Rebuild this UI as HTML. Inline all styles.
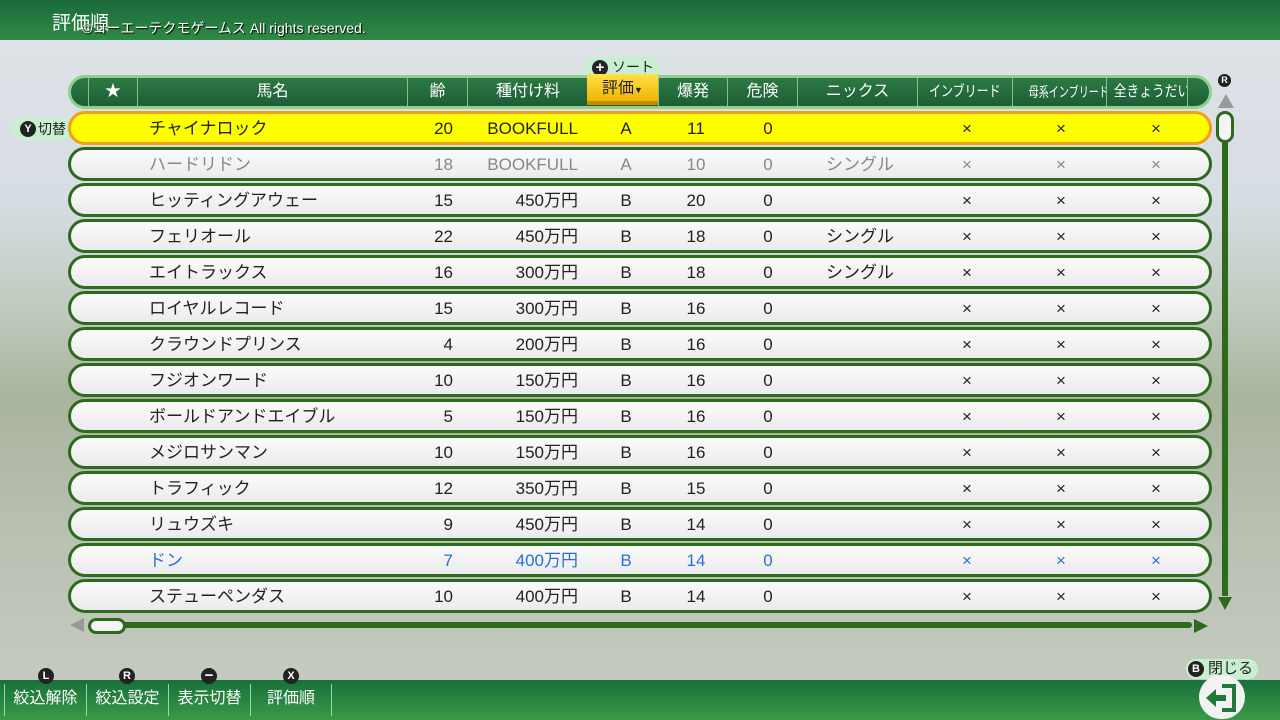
<!DOCTYPE html>
<html><head><meta charset="utf-8"><style>
*{margin:0;padding:0;box-sizing:border-box}
body{width:1280px;height:720px;overflow:hidden;position:relative;font-family:"Liberation Sans","Noto Sans CJK JP",sans-serif;
background:linear-gradient(180deg,#dfe3e8 0%,#d6dde3 28%,#c2cbc0 42%,#a9b49e 55%,#b9c1b3 75%,#c7cdc2 100%);}
.top{position:absolute;left:0;top:0;width:1280px;height:40px;background:linear-gradient(#1a6a3a,#2f8a45);}
.top .t{position:absolute;left:52px;top:8px;color:#fff;font-size:19px;}
.top .c{position:absolute;left:82px;top:18px;color:#fff;font-size:14px;text-shadow:1px 1px 1px #000}
.hdr{position:absolute;left:68px;top:75px;width:1144px;height:34px;border-radius:17px;background:linear-gradient(#2c7a44,#1d5e35);border:3px solid #8fd08f;}
.hc{position:absolute;top:0;height:28px;line-height:28px;color:#fff;font-size:16px;text-align:center;border-left:1px solid #7fc48a;white-space:nowrap;overflow:hidden}
.hc i{display:inline-block;font-style:normal;transform:scaleX(.8)}
.sort{position:absolute;left:587px;top:74px;width:71px;height:31px;background:linear-gradient(#ffe14a,#f0b400);border-bottom:4px solid #c98a00;text-align:center;line-height:30px;font-size:16px;color:#222}
.sortlbl{position:absolute;left:584px;top:57px;width:76px;height:20px;border-radius:10px;background:#c8efd0;font-size:14px;line-height:20px;padding-left:28px;color:#222}
.btn{position:absolute;width:16px;height:16px;border-radius:8px;background:#222;color:#fff;font-size:11px;font-weight:bold;text-align:center;line-height:16px}
.row{position:absolute;left:68px;width:1144px;height:34px;border-radius:17px;border:3px solid #2d6a1d;background:linear-gradient(#fbfbfb,#ebebed);font-size:17px;color:#222}
.row.sel{background:#ffff00;border-color:#f0a020}
.row.g{color:#888}.row.b{color:#2a6fd6}
.row span{position:absolute;top:1px;line-height:28px}
.sw{position:absolute;left:12px;top:118px;width:62px;height:22px;border-radius:11px;background:#c8efd0;font-size:14px;line-height:22px;padding-left:26px;color:#222}
.vbar{position:absolute;left:1222px;top:140px;width:6px;height:456px;background:#2d6a1d}
.bot{position:absolute;left:0;top:680px;width:1280px;height:40px;background:linear-gradient(#17703a,#3a9a48)}
.bb{position:absolute;top:684px;height:32px;line-height:30px;color:#fff;font-size:16px;border-left:1px solid #9fd8b0;text-align:center}
</style></head><body>
<div class="top"><span class="t">評価順</span><span class="c">©コーエーテクモゲームス All rights reserved.</span></div>

<div class="hdr">
<div class="hc" style="left:17px;width:49px">★</div>
<div class="hc" style="left:66px;width:270px">馬名</div>
<div class="hc" style="left:336px;width:60px">齢</div>
<div class="hc" style="left:396px;width:121px">種付け料</div>
<div class="hc" style="left:587px;width:69px">爆発</div>
<div class="hc" style="left:656px;width:70px">危険</div>
<div class="hc" style="left:726px;width:120px">ニックス</div>
<div class="hc" style="left:846px;width:95px;font-size:15px"><i>インブリード</i></div>
<div class="hc" style="left:941px;width:94px;font-size:14px"><i style="transform:scaleX(.72)">母系インブリード</i></div>
<div class="hc" style="left:1035px;width:82px;font-size:15px;border-right:1px solid #7fc48a"><i style="transform:scaleX(.85)">全きょうだい</i></div>
</div>
<div class="sortlbl">ソート</div><div class="btn" style="left:592px;top:60px;font-size:15px">+</div>
<div class="sort">評価<span style="font-size:9px">▼</span></div>

<div class="sw">切替</div><div class="btn" style="left:20px;top:121px">Y</div>

<div id="rows"></div>
<script>
var d=[["チャイナロック","20","BOOKFULL","A","11","0","","sel"],["ハードリドン","18","BOOKFULL","A","10","0","シングル","g"],["ヒッティングアウェー","15","450万円","B","20","0",""],["フェリオール","22","450万円","B","18","0","シングル"],["エイトラックス","16","300万円","B","18","0","シングル"],["ロイヤルレコード","15","300万円","B","16","0",""],["クラウンドプリンス","4","200万円","B","16","0",""],["フジオンワード","10","150万円","B","16","0",""],["ボールドアンドエイブル","5","150万円","B","16","0",""],["メジロサンマン","10","150万円","B","16","0",""],["トラフィック","12","350万円","B","15","0",""],["リュウズキ","9","450万円","B","14","0",""],["ドン","7","400万円","B","14","0","","b"],["ステューペンダス","10","400万円","B","14","0",""]];
var h="";d.forEach(function(r,i){h+='<div class="row '+(r[7]||"")+'" style="top:'+(111+i*36)+'px"><span style="left:78px">'+r[0]+'</span><span style="left:320px;width:62px;text-align:right">'+r[1]+'</span><span style="left:400px;width:107px;text-align:right">'+r[2]+'</span><span style="left:535px;width:40px;text-align:center">'+r[3]+'</span><span style="left:600px;width:50px;text-align:center">'+r[4]+'</span><span style="left:677px;width:40px;text-align:center">'+r[5]+'</span><span style="left:755px">'+r[6]+'</span><span style="left:878px;width:36px;text-align:center">×</span><span style="left:972px;width:36px;text-align:center">×</span><span style="left:1067px;width:36px;text-align:center">×</span></div>';});
document.getElementById("rows").innerHTML=h;
</script>

<div class="btn" style="left:1218px;top:74px;width:13px;height:13px;font-size:9px;line-height:13px">R</div>
<div style="position:absolute;left:1218px;top:94px;width:0;height:0;border-left:8px solid transparent;border-right:8px solid transparent;border-bottom:14px solid #999"></div>
<div class="vbar"></div>
<div style="position:absolute;left:1216px;top:111px;width:18px;height:32px;border-radius:9px;background:#f4f4f4;border:3px solid #2d6a1d"></div>
<div style="position:absolute;left:1218px;top:597px;width:0;height:0;border-left:7px solid transparent;border-right:7px solid transparent;border-top:13px solid #2d6a1d"></div>
<div style="position:absolute;left:100px;top:622px;width:1092px;height:6px;background:#2d6a1d;border-radius:3px"></div>
<div style="position:absolute;left:70px;top:618px;width:0;height:0;border-top:7px solid transparent;border-bottom:7px solid transparent;border-right:14px solid #999"></div>
<div style="position:absolute;left:88px;top:618px;width:38px;height:16px;border-radius:8px;background:#f4f4f4;border:3px solid #2d6a1d"></div>
<div style="position:absolute;left:1194px;top:619px;width:0;height:0;border-top:7px solid transparent;border-bottom:7px solid transparent;border-left:14px solid #2d6a1d"></div>

<div class="bot"></div>
<div class="bb" style="left:4px;width:82px">絞込解除</div>
<div class="bb" style="left:86px;width:82px">絞込設定</div>
<div class="bb" style="left:168px;width:82px">表示切替</div>
<div class="bb" style="left:250px;width:82px;border-right:1px solid #9fd8b0">評価順</div>
<div class="btn" style="left:38px;top:668px">L</div>
<div class="btn" style="left:119px;top:668px">R</div>
<div class="btn" style="left:201px;top:668px;font-size:15px">−</div>
<div class="btn" style="left:283px;top:668px">X</div>

<div style="position:absolute;left:1186px;top:659px;width:72px;height:20px;border-radius:10px;background:#c8efd0;font-size:15px;line-height:20px;padding-left:22px;color:#222">閉じる</div>
<div class="btn" style="left:1188px;top:661px">B</div>
<div style="position:absolute;left:1199px;top:675px;width:46px;height:44px;border-radius:23px;background:#f2f2f2"></div>
<svg style="position:absolute;left:1202px;top:680px" width="40" height="36" viewBox="0 0 40 36"><path d="M20 4h14v28h-14v-4h10v-20h-10z" fill="#1f7a3a"/><path d="M4 18l10-9v6h10v6h-10v6z" fill="#1f7a3a"/></svg>
</body></html>
